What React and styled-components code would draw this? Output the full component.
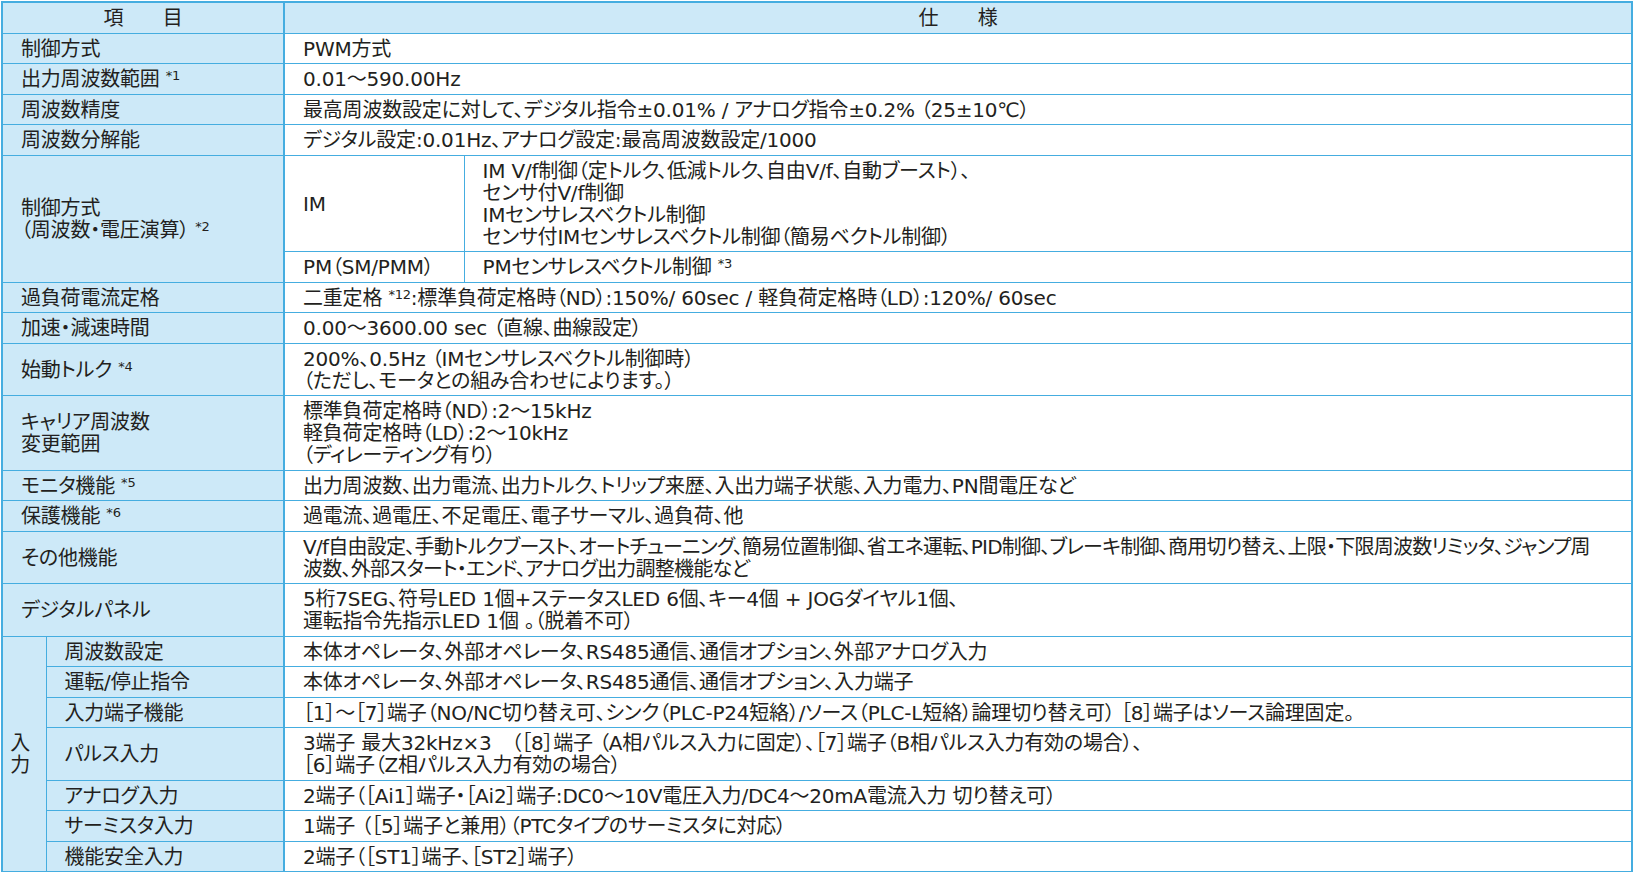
import React from "react";
import styled, { createGlobalStyle } from "styled-components";

const GlobalStyle = createGlobalStyle`
  html, body {
    margin: 0;
    padding: 0;
    background: #ffffff;
  }
  body {
    font-family: "DejaVu Sans", "Noto Sans CJK JP", sans-serif;
    color: #231f20;
  }
`;

const Page = styled.div`
  padding: 1px 1px 0 1px;
`;

const Table = styled.table`
  width: 100%;
  table-layout: fixed;
  border-collapse: collapse;
  border: 2px solid #45ade0;
  font-size: 20px;
  font-feature-settings: "palt";
  letter-spacing: -0.2px;
`;

const Head = styled.th`
  background: #cde9f8;
  border: 1px solid #45ade0;
  border-right-width: ${(p) => (p.$split ? "2px" : "1px")};
  font-weight: normal;
  text-align: center;
  line-height: 22px;
  padding: 4px 0 3.5px;
`;

const Cell = styled.td`
  background: ${(p) => (p.$label ? "#cde9f8" : "#ffffff")};
  border: 1px solid #45ade0;
  border-right-width: ${(p) => (p.$split ? "2px" : "1px")};
  line-height: 22px;
  padding: 4px 8px 3.5px ${(p) => (p.$side ? "0" : "18px")};
  text-align: ${(p) => (p.$side ? "center" : "left")};
  vertical-align: middle;
  white-space: nowrap;
  letter-spacing: ${(p) => (p.$tight ? "-0.75px" : "inherit")};
`;

const Line = styled.div``;

const Note = styled.span`
  font-size: 13px;
  line-height: 1;
  vertical-align: 6px;
`;

const Lines = ({ items }) => items.map((t, i) => <Line key={i}>{t}</Line>);

const simpleTop = [
  { label: "制御方式", value: ["PWM方式"] },
  { label: <>出力周波数範囲 <Note>*1</Note></>, value: ["0.01～590.00Hz"] },
  {
    label: "周波数精度",
    value: ["最高周波数設定に対して、デジタル指令±0.01% / アナログ指令±0.2% （25±10℃）"],
  },
  {
    label: "周波数分解能",
    value: ["デジタル設定:0.01Hz、アナログ設定:最高周波数設定/1000"],
  },
];

const simpleMid = [
  {
    label: "過負荷電流定格",
    value: [
      <>
        二重定格 <Note>*12</Note>:標準負荷定格時（ND）:150%/ 60sec / 軽負荷定格時（LD）:120%/ 60sec
      </>,
    ],
  },
  { label: "加速・減速時間", value: ["0.00～3600.00 sec （直線、曲線設定）"] },
  {
    label: <>始動トルク <Note>*4</Note></>,
    value: ["200%、0.5Hz （IMセンサレスベクトル制御時）", "（ただし、モータとの組み合わせによります。）"],
  },
  {
    label: ["キャリア周波数", "変更範囲"],
    value: ["標準負荷定格時（ND）:2～15kHz", "軽負荷定格時（LD）:2～10kHz", "（ディレーティング有り）"],
  },
  {
    label: <>モニタ機能 <Note>*5</Note></>,
    value: ["出力周波数、出力電流、出力トルク、トリップ来歴、入出力端子状態、入力電力、PN間電圧など"],
  },
  {
    label: <>保護機能 <Note>*6</Note></>,
    value: ["過電流、過電圧、不足電圧、電子サーマル、過負荷、他"],
  },
  {
    label: "その他機能",
    tight: true,
    value: [
      "V/f自由設定、手動トルクブースト、オートチューニング、簡易位置制御、省エネ運転、PID制御、ブレーキ制御、商用切り替え、上限・下限周波数リミッタ、ジャンプ周",
      "波数、外部スタート・エンド、アナログ出力調整機能など",
    ],
  },
  {
    label: "デジタルパネル",
    value: [
      "5桁7SEG、符号LED 1個+ステータスLED 6個、キー4個 + JOGダイヤル1個、",
      "運転指令先指示LED 1個 。（脱着不可）",
    ],
  },
];

const inputs = [
  {
    label: "周波数設定",
    value: ["本体オペレータ、外部オペレータ、RS485通信、通信オプション、外部アナログ入力"],
  },
  {
    label: "運転/停止指令",
    value: ["本体オペレータ、外部オペレータ、RS485通信、通信オプション、入力端子"],
  },
  {
    label: "入力端子機能",
    value: [
      "［1］～［7］端子（NO/NC切り替え可、シンク（PLC-P24短絡）/ソース（PLC-L短絡）論理切り替え可） ［8］端子はソース論理固定。",
    ],
  },
  {
    label: "パルス入力",
    value: [
      "3端子 最大32kHz×3　（［8］端子 （A相パルス入力に固定）、［7］端子（B相パルス入力有効の場合）、",
      "［6］端子（Z相パルス入力有効の場合）",
    ],
  },
  {
    label: "アナログ入力",
    value: ["2端子（［Ai1］端子・［Ai2］端子:DC0～10V電圧入力/DC4～20mA電流入力 切り替え可）"],
  },
  {
    label: "サーミスタ入力",
    value: ["1端子 （［5］端子と兼用）（PTCタイプのサーミスタに対応）"],
  },
  { label: "機能安全入力", value: ["2端子（［ST1］端子、［ST2］端子）"] },
];

const SimpleRow = ({ label, value, tight }) => (
  <tr>
    <Cell $label $split colSpan={2}>
      {Array.isArray(label) ? <Lines items={label} /> : label}
    </Cell>
    <Cell colSpan={2} $tight={tight}>
      <Lines items={value} />
    </Cell>
  </tr>
);

const SpecTable = () => {
  return (
    <Table>
      <colgroup>
        <col style={{ width: 44 }} />
        <col style={{ width: 238 }} />
        <col style={{ width: 180 }} />
        <col />
      </colgroup>
      <thead>
        <tr>
          <Head colSpan={2} $split>
            項　　目
          </Head>
          <Head colSpan={2}>仕　　様</Head>
        </tr>
      </thead>
      <tbody>
        {simpleTop.map((r, i) => (
          <SimpleRow key={i} {...r} />
        ))}
        <tr>
          <Cell $label $split colSpan={2} rowSpan={2}>
            <Line>制御方式</Line>
            <Line>
              （周波数・電圧演算） <Note>*2</Note>
            </Line>
          </Cell>
          <Cell>IM</Cell>
          <Cell>
            <Lines
              items={[
                "IM V/f制御（定トルク、低減トルク、自由V/f、自動ブースト）、",
                "センサ付V/f制御",
                "IMセンサレスベクトル制御",
                "センサ付IMセンサレスベクトル制御（簡易ベクトル制御）",
              ]}
            />
          </Cell>
        </tr>
        <tr>
          <Cell>PM（SM/PMM）</Cell>
          <Cell>
            PMセンサレスベクトル制御 <Note>*3</Note>
          </Cell>
        </tr>
        {simpleMid.map((r, i) => (
          <SimpleRow key={i} {...r} />
        ))}
        {inputs.map((r, i) => (
          <tr key={i}>
            {i === 0 && (
              <Cell $label $side rowSpan={inputs.length}>
                <Line>入</Line>
                <Line>力</Line>
              </Cell>
            )}
            <Cell $label $split>
              {r.label}
            </Cell>
            <Cell colSpan={2}>
              <Lines items={r.value} />
            </Cell>
          </tr>
        ))}
      </tbody>
    </Table>
  );
};

const App = () => {
  return (
    <Page>
      <GlobalStyle />
      <SpecTable />
    </Page>
  );
};

export default App;
